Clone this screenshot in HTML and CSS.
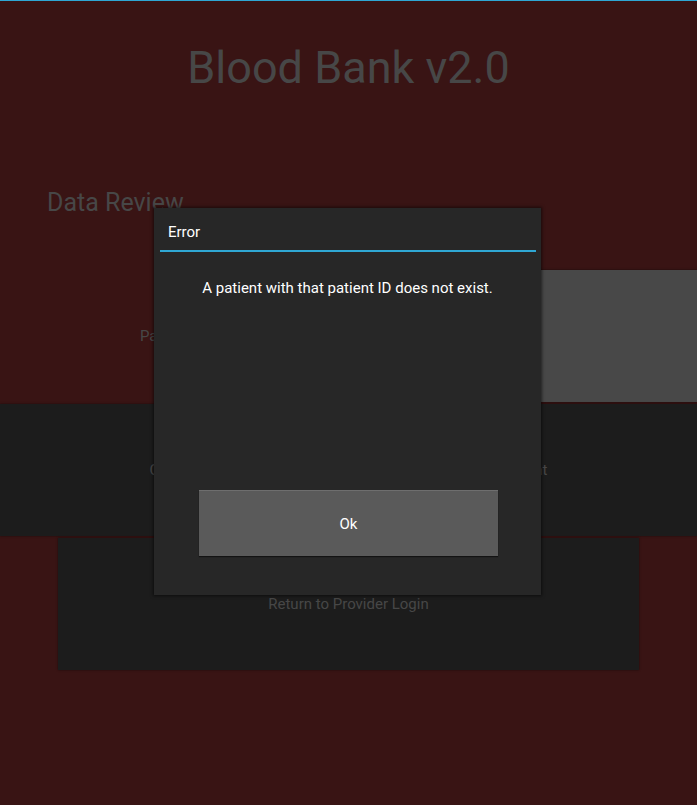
FILE: index.html
```html
<!DOCTYPE html>
<html>
<head>
<meta charset="utf-8">
<link rel="stylesheet" href="styles.css">
</head>
<body>
<div class="screen">
  <div class="topline"></div>
  <h1 class="app-title">Blood Bank v2.0</h1>
  <h2 class="section-title">Data Review</h2>
  <div class="field-row">
    <div class="field-label">Patient ID:</div>
    <div class="field-input"></div>
  </div>
  <div class="btn btn-wide">Continue to the Patient Data Review for the Selected Patient</div>
  <div class="btn btn-return">Return to Provider Login</div>

  <div class="popup">
    <div class="popup-title">Error</div>
    <div class="popup-sep"></div>
    <div class="popup-body">
      <p class="popup-msg">A patient with that patient ID does not exist.</p>
      <div class="popup-btn">Ok</div>
    </div>
  </div>
</div>
</body>
</html>
```
FILE: styles.css
```css
html, body {
  margin: 0;
  padding: 0;
  background: #391414;
}
.screen {
  position: relative;
  width: 697px;
  height: 805px;
  overflow: hidden;
  display: flex;
  flex-direction: column;
  align-items: stretch;
  font-family: Roboto, "Liberation Sans", sans-serif;
  background: #391414;
}
.topline {
  height: 1px;
  background: #2fa7d4;
  flex: none;
}
.app-title {
  margin: 44px 0 0 0;
  font-size: 45px;
  line-height: 45px;
  font-weight: 400;
  color: #474747;
  text-align: center;
}
.section-title {
  margin: 100px 0 0 47px;
  font-size: 25px;
  line-height: 25px;
  font-weight: 400;
  color: #474747;
}
.field-row {
  margin-top: 55px;
  height: 132px;
  display: flex;
  flex: none;
}
.field-label {
  flex: 1;
  display: flex;
  align-items: center;
  justify-content: center;
  font-size: 15px;
  color: #474747;
}
.field-input {
  flex: 1;
  background: #484848;
  box-shadow: 0 0 2px rgba(0,0,0,0.6);
}
.btn {
  display: flex;
  align-items: center;
  justify-content: center;
  background: #1c1c1c;
  color: #474747;
  font-size: 15px;
  height: 132px;
  flex: none;
  box-shadow: 0 0 2px rgba(0,0,0,0.5);
}
.btn-wide {
  margin-top: 2px;
}
.btn-return {
  margin: 2px 58px 0 58px;
}
.popup {
  position: absolute;
  left: 154px;
  top: 208px;
  width: 387px;
  height: 387px;
  background: #272727;
  box-shadow: 0 0 3px 1px rgba(0,0,0,0.55);
  display: flex;
  flex-direction: column;
  color: #ffffff;
}
.popup-title {
  margin: 15px 0 0 14px;
  font-size: 15px;
  line-height: 18px;
}
.popup-sep {
  margin: 9px 5px 0 6px;
  height: 2px;
  background: #2fa7d4;
}
.popup-body {
  flex: 1;
  display: flex;
  flex-direction: column;
  align-items: center;
}
.popup-msg {
  margin: 27px 0 0 0;
  font-size: 15px;
  line-height: 18px;
  text-align: center;
}
.popup-btn {
  margin: 193px 0 0 2px;
  width: 299px;
  height: 65px;
  background: #5a5a5a;
  border-top: 1px solid #6e6e6e;
  display: flex;
  align-items: center;
  justify-content: center;
  font-size: 15px;
  box-shadow: 0 1px 1px rgba(0,0,0,0.5);
}
```
